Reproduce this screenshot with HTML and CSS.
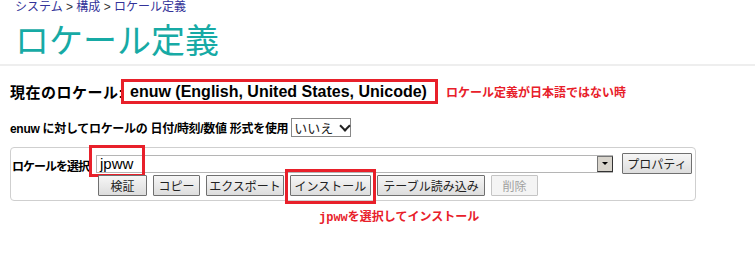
FILE: index.html
```html
<!DOCTYPE html>
<html lang="ja">
<head>
  <meta charset="UTF-8">
  <title>ロケール定義</title>
  <link rel="stylesheet" href="styles.css">
</head>
<body>
  <!-- パンくず -->
  <div class="breadcrumb">
    <a href="#">システム</a> &gt; <a href="#">構成</a> &gt; <a href="#">ロケール定義</a>
  </div>
  <h1 class="page-title">ロケール定義</h1>
  <div class="rule"></div>

  <!-- 現在のロケール -->
  <div class="current-row">
    <span class="current-label">現在のロケール:</span>
    <span class="current-value">enuw (English, United States, Unicode)</span>
    <span class="note">ロケール定義が日本語ではない時</span>
  </div>

  <div class="format-row">
    <span class="format-label">enuw に対してロケールの 日付/時刻/数値 形式を使用</span>
    <div class="select">いいえ <span class="chev"></span></div>
  </div>

  <!-- ロケール選択 -->
  <div class="panel">
    <div class="panel-label">ロケールを選択</div>
    <div class="panel-main">
      <div class="combo-row">
        <div class="combo">
          <span class="combo-text">jpww</span>
          <span class="mark mark-input"></span>
          <span class="combo-btn"><span class="tri"></span></span>
        </div>
        <button class="btn btn-prop">プロパティ</button>
      </div>
      <div class="btn-row">
        <button class="btn w-49">検証</button>
        <button class="btn w-47">コピー</button>
        <button class="btn w-78">エクスポート</button>
        <button class="btn w-81 install">インストール<span class="mark mark-install"></span></button>
        <button class="btn w-108">テーブル読み込み</button>
        <button class="btn w-47" disabled>削除</button>
      </div>
    </div>
  </div>
  <div class="note note-bottom"><span class="mono">jpww</span>を選択してインストール</div>
</body>
</html>
```

FILE: styles.css
```css
body {
  margin: 0;
  font-family: "Liberation Sans", "Noto Sans CJK JP", sans-serif;
  color: #000;
  background-color: #fff;
}
.breadcrumb {
  padding-left: 15px;
  font-size: 12px;
  line-height: 14px;
  color: #333;
}
.breadcrumb a {
  color: #333399;
  text-decoration: none;
}
.page-title {
  margin: 3px 0 0 15px;
  font-size: 34px;
  line-height: 43px;
  font-weight: normal;
  color: #17aaa5;
  font-family: "Noto Sans CJK JP", sans-serif;
}
.rule {
  margin-top: 4px;
  border-top: 2px solid #eeeeee;
}

.current-row {
  display: flex;
  align-items: center;
  margin: 13px 0 0 10px;
  height: 25px;
}
.current-label {
  font-size: 15px;
  font-weight: bold;
  letter-spacing: 0.5px;
}
.current-value {
  margin-left: -3px;
  padding: 0 8px 0 6px;
  height: 19px;
  line-height: 19px;
  border: 3px solid #e8202a;
  font-size: 16px;
  font-weight: bold;
}
.note {
  color: #e8202a;
  font-size: 12px;
  font-weight: bold;
}
.current-row .note {
  margin-left: 8px;
}

.format-row {
  display: flex;
  align-items: center;
  margin: 14px 0 0 10px;
}
.format-label {
  font-size: 12px;
  font-weight: bold;
  letter-spacing: -0.3px;
}
.select {
  display: flex;
  align-items: center;
  margin-left: 3px;
  width: 56px;
  height: 17px;
  padding-left: 2px;
  border: 1px solid #888;
  font-size: 13px;
  color: #222;
}
.chev {
  width: 6px;
  height: 6px;
  margin: -4px 0 0 8px;
  border-right: 2px solid #222;
  border-bottom: 2px solid #222;
  transform: rotate(45deg);
}

.panel {
  display: flex;
  margin: 10px 0 0 10px;
  width: 680px;
  padding: 5px 3px 4px 1px;
  border: 1px solid #cfcfcf;
  border-radius: 4px;
}
.panel-label {
  width: 84px;
  padding-top: 4px;
  font-size: 12px;
  font-weight: bold;
  letter-spacing: -1px;
  white-space: nowrap;
}
.panel-main {
  flex: 1;
}
.combo-row {
  display: flex;
  align-items: center;
  gap: 9px;
}
.combo {
  position: relative;
  display: flex;
  align-items: center;
  flex: 1;
  height: 16px;
  border: 1px solid #b5b5b5;
  border-right: none;
}
.combo-text {
  padding-left: 3px;
  font-size: 15px;
}
.combo-btn {
  margin-left: auto;
  display: flex;
  align-items: center;
  justify-content: center;
  width: 14px;
  height: 14px;
  border: 1px solid #777;
  border-right-color: #333;
  border-bottom-color: #333;
  background-color: #d8d4cc;
}
.tri {
  border-left: 3px solid transparent;
  border-right: 3px solid transparent;
  border-top: 3px solid #000;
}

.btn {
  position: relative;
  height: 21px;
  padding: 0;
  border: 1px solid #707070;
  border-radius: 1px;
  background: linear-gradient(#f6f6f6, #dddddd);
  font-family: "Noto Sans CJK JP", sans-serif;
  font-size: 12px;
  line-height: 19px;
  color: #222;
}
.btn:disabled {
  border-color: #c4c4c4;
  background: #f4f4f4;
  color: #a0a0a0;
}
.btn-prop {
  width: 70px;
}
.btn-row {
  display: flex;
  gap: 6px;
  margin-top: 1px;
  padding-left: 2px;
}
.w-47 { width: 47px; }
.w-49 { width: 49px; }
.w-78 { width: 78px; }
.w-81 { width: 81px; }
.w-108 { width: 108px; }

/* 赤枠の注記 */
.mark {
  position: absolute;
  border: 3px solid #e8202a;
  pointer-events: none;
}
.mark-input {
  left: -8px;
  top: -11px;
  width: 50px;
  height: 26px;
}
.mark-install {
  left: -6px;
  top: -7px;
  width: 85px;
  height: 29px;
}
.note-bottom {
  margin: 6px 0 0 319px;
}
.mono {
  font-family: "Liberation Mono", monospace;
}
```
